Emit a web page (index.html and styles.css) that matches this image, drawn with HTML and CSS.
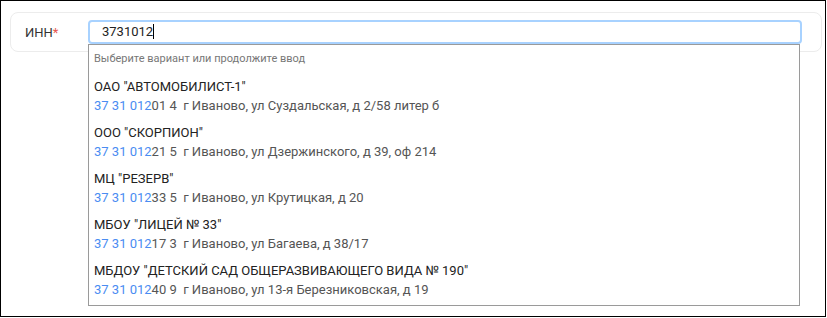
FILE: index.html
```html
<html>
<head>
    <meta charset="utf-8">
    <link rel="stylesheet" href="styles.css">
</head>
<body>

<div class="frame">
  <div class="card">
    <div class="label">ИНН<span class="req">*</span></div>
    <div class="field">
      <div class="input">3731012<span class="caret"></span></div>

      <div class="suggest">
        <div class="hint">Выберите вариант или продолжите ввод</div>

        <div class="item">
          <div class="name">ОАО "АВТОМОБИЛИСТ-1"</div>
          <div class="addr"><span class="hl">37 31 012</span>01 4&nbsp; г Иваново, ул Суздальская, д 2/58 литер б</div>
        </div>
        <div class="item">
          <div class="name">ООО "СКОРПИОН"</div>
          <div class="addr"><span class="hl">37 31 012</span>21 5&nbsp; г Иваново, ул Дзержинского, д 39, оф 214</div>
        </div>
        <div class="item">
          <div class="name">МЦ "РЕЗЕРВ"</div>
          <div class="addr"><span class="hl">37 31 012</span>33 5&nbsp; г Иваново, ул Крутицкая, д 20</div>
        </div>
        <div class="item">
          <div class="name">МБОУ "ЛИЦЕЙ № 33"</div>
          <div class="addr"><span class="hl">37 31 012</span>17 3&nbsp; г Иваново, ул Багаева, д 38/17</div>
        </div>
        <div class="item">
          <div class="name">МБДОУ "ДЕТСКИЙ САД ОБЩЕРАЗВИВАЮЩЕГО ВИДА № 190"</div>
          <div class="addr"><span class="hl">37 31 012</span>40 9&nbsp; г Иваново, ул 13-я Березниковская, д 19</div>
        </div>
      </div>
    </div>
  </div>
</div>

</body>
</html>
```

FILE: styles.css
```css
* {
  margin: 0px;
  padding: 0px;
  box-sizing: border-box;
}
body {
  background-color: #fff;
  font-family: Roboto, "Liberation Sans", sans-serif;
  font-size: 13px;
  color: #333;
}
.frame {
  width: 826px;
  height: 317px;
  border: 1px solid #000;
  padding: 11px 0 0 9px;
}
.card {
  display: flex;
  align-items: center;
  width: 812px;
  height: 40px;
  border: 1px solid #ececec;
  border-radius: 8px;
  padding-left: 14px;
}
.label {
  width: 63px;
  color: #333;
}
.req {
  color: #e8574f;
}
.field {
  position: relative;
  width: 714px;
}
.input {
  height: 24px;
  border: 2px solid #a8d2ff;
  border-radius: 4px;
  padding-left: 12px;
  line-height: 20px;
  color: #222;
}
.caret {
  display: inline-block;
  width: 1px;
  height: 15px;
  background-color: #000;
  vertical-align: -3px;
}
.suggest {
  position: absolute;
  left: 0;
  top: 24px;
  width: 712px;
  border: 1px solid #9a9a9a;
  background-color: #fff;
  padding: 0 5px 1px;
}
.hint {
  font-size: 11px;
  line-height: 16px;
  color: #777;
  padding: 6px 0 7px;
}
.item {
  padding: 3px 0 4px;
}
.name {
  line-height: 19px;
  color: #222;
}
.addr {
  line-height: 20px;
  color: #555;
}
.hl {
  color: #4a8cf2;
}
```
